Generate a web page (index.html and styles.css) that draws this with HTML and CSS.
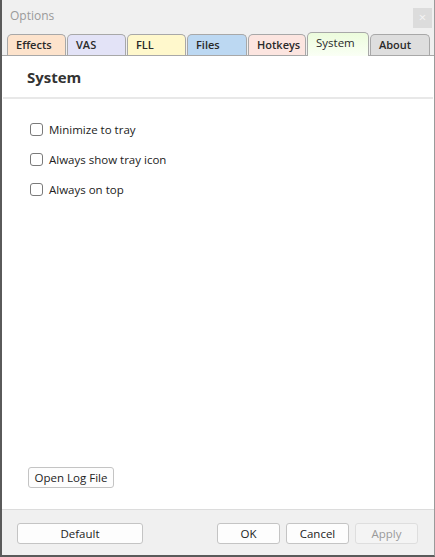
FILE: index.html
```
<!DOCTYPE html>
<html>
<head>
<meta charset="utf-8">
<link rel="stylesheet" href="styles.css">
</head>
<body>
<div class="window">
  <div class="titlebar">
    <span class="title">Options</span>
    <span class="close">×</span>
  </div>
  <div class="tabs">
    <div class="tab t-effects">Effects</div>
    <div class="tab t-vas">VAS</div>
    <div class="tab t-fll">FLL</div>
    <div class="tab t-files">Files</div>
    <div class="tab t-hotkeys">Hotkeys</div>
    <div class="tab t-system active">System</div>
    <div class="tab t-about">About</div>
  </div>
  <div class="panel">
    <div class="heading">System</div>
    <div class="sep"></div>
    <div class="options">
      <label class="opt"><span class="box"></span>Minimize to tray</label>
      <label class="opt"><span class="box"></span>Always show tray icon</label>
      <label class="opt"><span class="box"></span>Always on top</label>
    </div>
    <div class="spacer"></div>
    <div class="logrow"><span class="btn log">Open Log File</span></div>
  </div>
  <div class="footer">
    <span class="btn default">Default</span>
    <div class="right">
      <span class="btn ok">OK</span>
      <span class="btn cancel">Cancel</span>
      <span class="btn apply">Apply</span>
    </div>
  </div>
</div>
</body>
</html>
```
FILE: styles.css
```
html, body {
  margin: 0;
  padding: 0;
  background: #ffffff;
}
.window {
  width: 435px;
  height: 557px;
  box-sizing: border-box;
  border-left: 2px solid #5a5a5a;
  border-right: 1px solid #9a9a9a;
  border-bottom: 2px solid #5a5a5a;
  display: flex;
  flex-direction: column;
  font-family: "Open Sans", "Noto Sans", sans-serif;
  font-size: 11.5px;
  color: #1e1e1e;
  background: #f0f0f0;
}
.titlebar {
  height: 32px;
  display: flex;
  align-items: flex-start;
  justify-content: space-between;
  background: #f0f0f0;
}
.title {
  margin: 7px 0 0 8px;
  font-size: 12px;
  color: #9a9a9a;
}
.close {
  width: 19px;
  height: 20px;
  margin: 8px 2px 0 0;
  background: #dcdcdc;
  color: #f4f4f4;
  font-size: 13px;
  line-height: 19px;
  text-align: center;
}
.tabs {
  height: 23px;
  display: flex;
  align-items: flex-end;
  padding-left: 5px;
  border-bottom: 1px solid #a8a8a8;
  background: #f0f0f0;
}
.tab {
  box-sizing: border-box;
  height: 21px;
  border: 1px solid #a8a8a8;
  border-bottom: none;
  border-radius: 5px 5px 0 0;
  padding-left: 8px;
  line-height: 19px;
  font-size: 11px;
  font-weight: 600;
  color: #2a2a2a;
  margin-right: 1px;
}
.t-effects { width: 59px; background: #fde3cc; }
.t-vas { width: 59px; background: #e3e3f7; }
.t-fll { width: 59px; background: #fff8cc; }
.t-files { width: 60px; background: #bcd8f2; }
.t-hotkeys { width: 58px; background: #fce5e0; }
.t-system {
  width: 62px;
  background: linear-gradient(#ecfcdc, #fafff5);
  font-size: 11.5px;
  font-weight: 400;
  line-height: 20px;
  margin-bottom: -1px;
  height: 24px;
  padding-bottom: 3px;
}
.t-about { width: 60px; background: #dedede; }
.panel {
  flex: 1;
  background: #ffffff;
  display: flex;
  flex-direction: column;
  border-bottom: 1px solid #dcdcdc;
}
.heading {
  padding: 11px 0 0 25px;
  height: 31px;
  box-sizing: border-box;
  font-size: 15px;
  font-weight: 700;
  color: #333333;
  line-height: 20px;
}
.sep {
  height: 2px;
  margin: 10px 1px 0 1px;
  background: #e8e8e8;
}
.options {
  display: flex;
  flex-direction: column;
  gap: 13px;
  padding: 22px 0 0 28px;
}
.opt {
  display: flex;
  align-items: center;
  height: 17px;
  color: #222222;
}
.box {
  width: 11px;
  height: 11px;
  border: 1px solid #7a7a7a;
  border-radius: 3px;
  margin-right: 6px;
  background: #ffffff;
}
.spacer { flex: 1; }
.logrow {
  padding: 0 0 21px 26px;
}
.btn {
  display: inline-flex;
  align-items: center;
  justify-content: center;
  box-sizing: border-box;
  border: 1px solid #c4c4c4;
  border-radius: 3px;
  background: #fdfdfd;
  color: #222222;
}
.log {
  width: 86px;
  height: 21px;
}
.footer {
  height: 45px;
  display: flex;
  align-items: flex-start;
  justify-content: space-between;
  padding: 13px 16px 0 15px;
  box-sizing: border-box;
  background: #f0f0f0;
}
.right {
  display: flex;
  gap: 6px;
}
.footer .btn {
  height: 21px;
}
.default { width: 126px; }
.ok, .cancel, .apply { width: 63px; }
.apply {
  color: #9a9a9a;
  background: #f4f4f4;
  border-color: #dedede;
}
```
